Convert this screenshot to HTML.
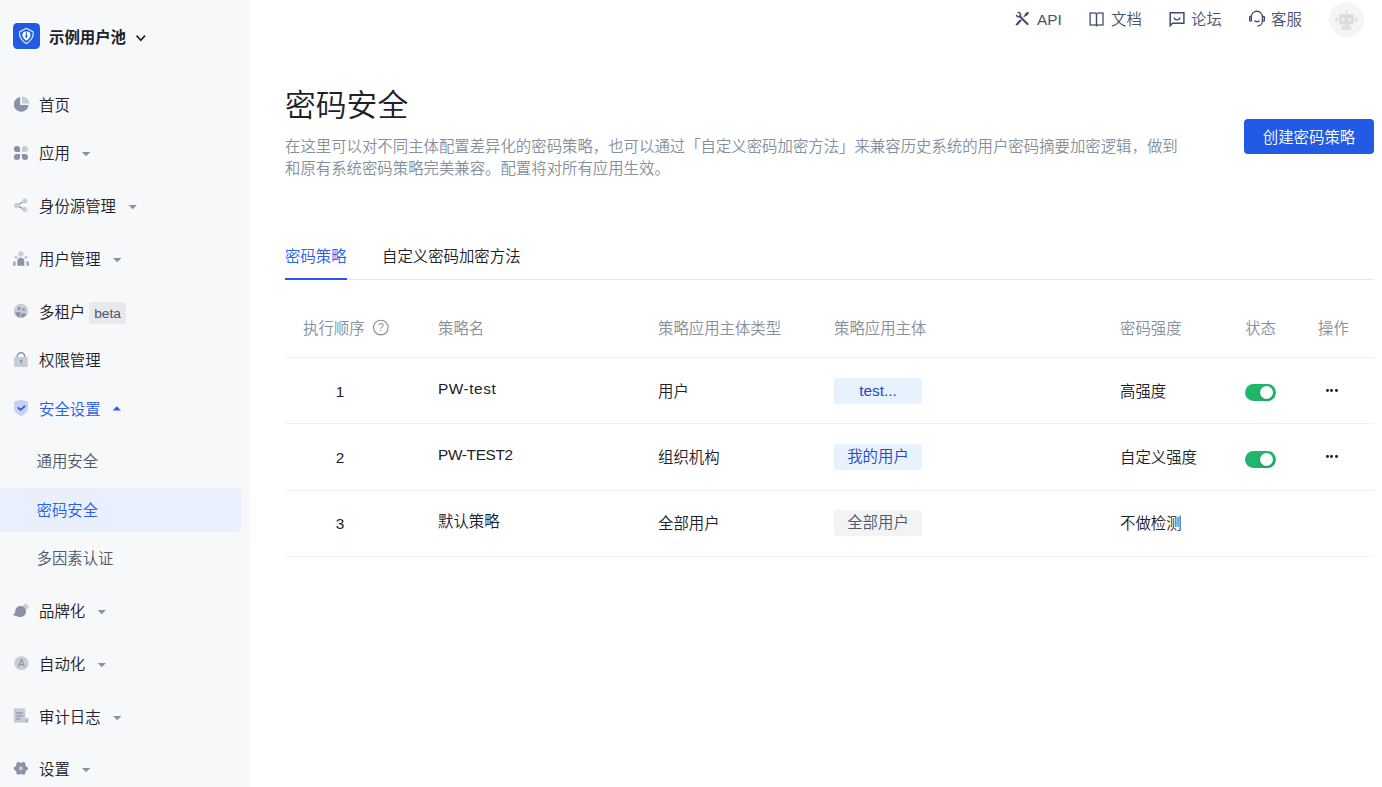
<!DOCTYPE html>
<html lang="zh-CN">
<head>
<meta charset="utf-8">
<title>密码安全</title>
<style>
*{box-sizing:border-box;margin:0;padding:0}
html,body{width:1382px;height:787px;overflow:hidden;background:#fff}
body{text-spacing-trim:space-all;font-weight:350;font-family:"Liberation Sans","Noto Sans CJK SC",sans-serif;font-size:15.4px;color:#1d2129;position:relative}
.abs{position:absolute;white-space:nowrap}
#side{position:absolute;left:0;top:0;width:250px;height:787px;background:#f7f8fa}
.nav{position:absolute;left:39px;height:24px;line-height:24px;font-size:15.4px;color:#1d2129;white-space:nowrap}
.nav.sub{left:36.5px;color:#4e5969}
.nav.on{color:#2860ee}
#sel{position:absolute;left:0;top:488px;width:241px;height:44px;background:#e9effd;border-radius:0 4.4px 4.4px 0}
.top{position:absolute;top:9px;height:22px;line-height:22px;font-size:15.4px;color:#4a5470;white-space:nowrap}
.th{position:absolute;top:318px;height:22px;line-height:22px;font-size:15.4px;color:#86909c;white-space:nowrap}
.td{position:absolute;height:22px;line-height:22px;font-size:15.4px;color:#1d2129;white-space:nowrap}
.hr{position:absolute;left:285px;width:1089px;height:1px;background:#f0f0f0}
.tag{position:absolute;left:834px;width:88px;height:26px;line-height:26px;border-radius:3px;text-align:center;font-size:15.4px;background:#e8f1fe;color:#2846c0}
.tag.gray{background:#f2f3f5;color:#4e5969}
.sw{position:absolute;left:1245px;width:31px;height:17px;border-radius:8.5px;background:#21b76b}
.sw:after{content:"";position:absolute;right:2.6px;top:2px;width:13px;height:13px;border-radius:50%;background:#fff;box-shadow:0 2px 4px rgba(0,35,11,.2)}
.dots{position:absolute;left:1326px;width:11px;height:3px}
.dots i{position:absolute;top:0;width:2.8px;height:2.8px;background:#1d2129;border-radius:50%}
</style>
</head>
<body>
<div id="side">
  <div class="abs" style="left:13px;top:22.8px;width:27px;height:26.2px;border-radius:4.4px;background:#215ae5;box-shadow:0 0 0 1px rgba(255,255,255,.75)"></div>
  <div class="abs" style="left:49px;top:26px;height:24px;line-height:24px;font-size:15.4px;font-weight:700;color:#1d2129">示例用户池</div>
  <div class="nav" style="top:94px">首页</div>
  <div class="nav" style="top:142px">应用</div>
  <div class="nav" style="top:195px">身份源管理</div>
  <div class="nav" style="top:248px">用户管理</div>
  <div class="nav" style="top:301px">多租户</div>
  <div class="abs" style="left:89px;top:302px;width:37px;height:21.8px;line-height:24.4px;border-radius:3.5px;background:#e8e9ed;color:#4b5470;font-size:13.7px;text-align:center">beta</div>
  <div class="nav" style="top:349px">权限管理</div>
  <div class="nav on" style="top:398px">安全设置</div>
  <div class="nav sub" style="top:450px">通用安全</div>
  <div id="sel"></div>
  <div class="nav sub on" style="top:499px">密码安全</div>
  <div class="nav sub" style="top:547px">多因素认证</div>
  <div class="nav" style="top:600px">品牌化</div>
  <div class="nav" style="top:653px">自动化</div>
  <div class="nav" style="top:706px">审计日志</div>
  <div class="nav" style="top:758px">设置</div>

<svg class="abs" style="left:0;top:0;pointer-events:none" width="1382" height="787" viewBox="0 0 1382 787">
<!-- logo shield -->
<g id="logo">
<path d="M26.4 28.3 L33.3 31.9 C33.6 37 31 41 26.4 43.6 C21.8 41 19.2 37 19.5 31.9 Z" fill="none" stroke="#fff" stroke-opacity=".8" stroke-width="1.3" stroke-linejoin="round"/>
<path d="M26.4 31.2 C28 31.2 30.5 32.2 30.5 34.8 C30.5 37.4 28.4 39.3 26.4 40.7 C24.4 39.3 22.3 37.4 22.3 34.8 C22.3 32.2 24.8 31.2 26.4 31.2Z" fill="#fff"/>
<path d="M26.4 29.8 V34.5" stroke="#215ae5" stroke-width=".9" fill="none"/>
<path d="M26.4 33.6 C27.4 35.2 27.5 36.2 27.3 36.8 C27.1 37.6 26.7 38.2 26.4 38.8 C26.1 38.2 25.7 37.6 25.5 36.8 C25.3 36.2 25.4 35.2 26.4 33.6Z" fill="#215ae5"/>
</g>
<path d="M136.6 35.6 L140.8 40.4 L145 35.6" fill="none" stroke="#1d2129" stroke-width="1.6"/>
<!-- pie -->
<path d="M20.1 97.1 A7.4 7.4 0 1 0 28.6 105 H20.1 Z" fill="#8992a8"/>
<path d="M21.9 96.4 A7.4 7.4 0 0 1 29.4 103.6 H21.9 Z" fill="#c8ccd7"/>
<!-- apps -->
<path d="M16.9 146 a3 3 0 0 1 3.1 3 v2.95 h-3.1 a2.97 2.97 0 0 1 0 -5.95Z" fill="#8992a8"/>
<path d="M25 146 a2.97 2.97 0 0 1 0 5.95 h-3.1 v-2.95 a3 3 0 0 1 3.1 -3Z" fill="#c8ccd7"/>
<path d="M16.9 160 a3.05 3.05 0 0 1 0 -6.1 h3.1 v3.1 a3 3 0 0 1 -3.1 3Z" fill="#8992a8"/>
<path d="M25 160 a3 3 0 0 1 -3.1 -3 v-3.1 h3.1 a3.05 3.05 0 0 1 0 6.1Z" fill="#8992a8"/>
<!-- share -->
<path d="M24.8 201 L16.6 205.4 L24.8 209.6" fill="none" stroke="#8992a8" stroke-width="1.2"/>
<circle cx="16.6" cy="205.4" r="2.5" fill="#c8ccd7"/><circle cx="24.8" cy="201" r="2.5" fill="#c8ccd7"/><circle cx="24.8" cy="209.6" r="2.5" fill="#c8ccd7"/>
<!-- users -->
<circle cx="20.9" cy="253.9" r="2.7" fill="#c8ccd7"/>
<circle cx="16.1" cy="257.3" r="1.7" fill="#c8ccd7"/><circle cx="26" cy="257.3" r="1.7" fill="#c8ccd7"/>
<path d="M17.3 265.7 V261.3 a3.5 3.5 0 0 1 7 0 V265.7Z" fill="#8992a8"/>
<path d="M13 265.7 V263.6 a2.6 2.6 0 0 1 2.6 -2.6 V265.7Z" fill="#8992a8" fill-opacity=".8"/>
<path d="M29 265.7 V263.6 a2.6 2.6 0 0 0 -2.6 -2.6 V265.7Z" fill="#8992a8" fill-opacity=".8"/>
<!-- tenant -->
<circle cx="21" cy="311" r="7.2" fill="#c8ccd7"/>
<ellipse cx="19.1" cy="308.8" rx="1.4" ry="1.7" fill="#8992a8"/><circle cx="23.7" cy="309.6" r="1.3" fill="#8992a8"/>
<path d="M15.6 312.3 H20.8 L19.7 317.5 C18.2 317.2 16.4 316 15.6 314.2Z" fill="#8992a8"/>
<path d="M21.1 317.5 V314 C22 313 25 313 26 314 C26 315.4 23.8 317.5 21.1 317.5Z" fill="#8992a8"/>
<!-- lock -->
<path d="M17.2 357.6 V356.4 a3.75 3.75 0 0 1 7.5 0 V357.6" fill="none" stroke="#8992a8" stroke-width="1.5"/>
<rect x="14.1" y="357.1" width="13.6" height="9.8" rx="0.6" fill="#c8ccd7"/>
<circle cx="21.2" cy="360.8" r="1.25" fill="#8992a8"/><rect x="20.7" y="360.8" width="1" height="3" rx=".4" fill="#8992a8"/>
<!-- shield -->
<path d="M21.05 399.7 L28 401.4 V408.6 C28 412.2 24.6 414.6 21.05 416.3 C17.5 414.6 14.1 412.2 14.1 408.6 V401.4 Z" fill="#c6d2f1"/>
<path d="M17.7 407.3 L20.6 409.9 L25.1 405.8" fill="none" stroke="#215ae5" stroke-width="1.7"/>
<!-- brush -->
<path d="M25.4 603.6 L29 606.4 L26.6 609.4 L22.8 606.7Z" fill="#c8ccd7" stroke="#c8ccd7" stroke-width=".6" stroke-linejoin="round"/>
<path d="M12.8 614.6 C14.6 613.8 15 613 15.2 611.4 C15.4 608.2 17.8 606 20.6 606 C23.6 606 26 608.4 26 611.4 C26 614.6 23.4 616.9 20.4 616.9 C17.4 616.9 14.6 616 12.8 614.6Z" fill="#8992a8"/>
<!-- A -->
<circle cx="21.4" cy="663.25" r="7.1" fill="#c8ccd7"/>
<text x="21.4" y="666.8" font-size="10.2" text-anchor="middle" fill="#8992a8" font-family="Liberation Sans, sans-serif">A</text>
<!-- doc -->
<path d="M15 708.2 H24.1 a1.2 1.2 0 0 1 1.2 1.2 V718 H28.7 V721.3 a1.5 1.5 0 0 1 -1.5 1.5 H15 a1.2 1.2 0 0 1 -1.2 -1.2 V709.4 a1.2 1.2 0 0 1 1.2 -1.2Z" fill="#c8ccd7"/>
<path d="M25.8 719.6 H26.6 L27 721.9 H25.8Z" fill="#8992a8"/>
<path d="M16.1 712.9 H22.9 M16.1 716 H22.9 M16.1 719 H20.2" stroke="#8992a8" stroke-width="1.5" fill="none" stroke-opacity=".8"/>
<path d="M81.9 152 H90.30000000000001 L86.10000000000001 156.2Z" fill="#8992a8"/>
<path d="M128.5 205 H136.9 L132.7 209.2Z" fill="#8992a8"/>
<path d="M113 258 H121.4 L117.2 262.2Z" fill="#8992a8"/>
<path d="M112.6 410.4 L116.8 406.2 L121.0 410.4Z" fill="#2860ee"/>
<path d="M97.6 610 H106.0 L101.8 614.2Z" fill="#8992a8"/>
<path d="M97.6 663 H106.0 L101.8 667.2Z" fill="#8992a8"/>
<path d="M113 716 H121.4 L117.2 720.2Z" fill="#8992a8"/>
<path d="M81.9 768 H90.30000000000001 L86.10000000000001 772.2Z" fill="#8992a8"/>
<!-- gear -->
<circle cx="20.9" cy="768.4" r="5.6" fill="#8992a8"/><circle cx="26.00" cy="768.40" r="2" fill="#8992a8"/><circle cx="23.45" cy="772.82" r="2" fill="#8992a8"/><circle cx="18.35" cy="772.82" r="2" fill="#8992a8"/><circle cx="15.80" cy="768.40" r="2" fill="#8992a8"/><circle cx="18.35" cy="763.98" r="2" fill="#8992a8"/><circle cx="23.45" cy="763.98" r="2" fill="#8992a8"/><circle cx="20.9" cy="768.4" r="2.1" fill="#c8ccd7"/>
</svg>
</div>

<div class="top" style="left:1037px">API</div>
<div class="top" style="left:1111px">文档</div>
<div class="top" style="left:1191px">论坛</div>
<div class="top" style="left:1271px">客服</div>
<div class="abs" style="left:1329.1px;top:1.9px;width:34.8px;height:34.8px;border-radius:50%;background:#f5f5f5"></div>
<svg class="abs" style="left:0;top:0;pointer-events:none" width="1382" height="787" viewBox="0 0 1382 787">
<!-- header icons -->
<g fill="none" stroke="#414b6b" stroke-linecap="round" stroke-linejoin="round">
<path d="M1019.7 16.3 L1027.5 24.1" stroke-width="2.1"/>
<path d="M1017.6 12.75 A2.1 2.1 0 1 1 1016.4 14.85" stroke-width="1.4" stroke-linecap="butt"/>
<path d="M1025.8 14.9 L1027.6 13.1" stroke-width="2.5"/>
<path d="M1024 16.6 L1025.8 14.9" stroke-width="1.2"/>
<path d="M1020.2 20.7 L1017 24.3" stroke-width="2.2" stroke-linecap="square"/>
</g>
<g fill="none" stroke="#414b6b" stroke-width="1.4" stroke-linejoin="miter">
<path d="M1096.5 14.2 C1096.2 13.2 1095.4 12.9 1094.6 12.9 H1090.1 V25 H1103 V12.9 H1098.4 C1097.6 12.9 1096.8 13.2 1096.5 14.2" stroke-width="1.5" stroke-opacity=".85"/>
<path d="M1096.5 14 V26.6" stroke-width="1.4"/>
<path d="M1170.2 12.85 H1183.9 V23.25 H1172.6 L1170.2 25.6 Z" stroke-width="1.5"/>
<path d="M1174.2 17.5 C1174.4 20.7 1179.7 20.7 1179.9 17.5" stroke-width="1.4"/>
<path d="M1251.3 21 V16.8 A5.55 5.55 0 0 1 1262.4 16.8 V21 C1262.4 24 1260.2 26 1257.4 26.1" stroke-width="1.3"/>
<rect x="1249.6" y="16.4" width="1.8" height="4.8" rx=".9" stroke-width="1.2"/>
<rect x="1262.7" y="16.4" width="1.8" height="4.8" rx=".9" stroke-width="1.2"/>
<path d="M1254.3 20.8 Q1257 22.7 1259.7 20.8" stroke-width="1.4"/>
</g>
<!-- robot -->
<g fill="#dcdcdc">
<rect x="1339" y="14.2" width="14.8" height="10.4" rx=".8"/>
<rect x="1345.9" y="11" width="1" height="3.4"/><circle cx="1346.4" cy="10.7" r="1.05"/>
<path d="M1335 18.6 l2.5 -1.8 v5.2 l-2.5 -1.8Z M1358 18.6 l-2.5 -1.8 v5.2 l2.5 -1.8Z"/>
<path d="M1344.4 24.4 h4.5 v1.8 h2.3 v3.5 h-9.4 v-3.5 h2.6Z"/>
</g>
<circle cx="1342.8" cy="19.5" r="1.45" fill="#f5f5f5"/><circle cx="1349.7" cy="19.5" r="1.45" fill="#f5f5f5"/>
<!-- help -->
<circle cx="380.8" cy="327.6" r="7.3" fill="none" stroke="#86909c" stroke-width="1.1"/>
<text x="380.8" y="331.4" font-size="10.5" text-anchor="middle" fill="#86909c" font-family="Liberation Sans, sans-serif">?</text>
</svg>

<div class="abs" style="left:285px;top:85px;height:42px;line-height:42px;font-size:30.8px;font-weight:350;color:#1d2129">密码安全</div>
<div class="abs" style="left:285px;top:136px;width:900px;line-height:22px;font-size:15.4px;color:#86909c;white-space:normal">在这里可以对不同主体配置差异化的密码策略，也可以通过「自定义密码加密方法」来兼容历史系统的用户密码摘要加密逻辑，做到<br>和原有系统密码策略完美兼容。配置将对所有应用生效。</div>
<div class="abs" style="left:1244px;top:119px;width:130px;height:35px;line-height:38px;border-radius:4px;background:#215ae5;color:#fff;font-size:15.4px;text-align:center">创建密码策略</div>

<div class="abs" style="left:285px;top:246px;height:22px;line-height:22px;font-size:15.4px;color:#2b5ff0">密码策略</div>
<div class="abs" style="left:382px;top:246px;height:22px;line-height:22px;font-size:15.4px;color:#1d2129">自定义密码加密方法</div>
<div class="hr" style="top:279px;background:#e5e6eb"></div>
<div class="abs" style="left:285px;top:278px;width:62px;height:2px;background:#2257f0"></div>

<div class="th" style="left:303px">执行顺序</div>
<div class="th" style="left:438px">策略名</div>
<div class="th" style="left:658px">策略应用主体类型</div>
<div class="th" style="left:834px">策略应用主体</div>
<div class="th" style="left:1120px">密码强度</div>
<div class="th" style="left:1245px">状态</div>
<div class="th" style="left:1318px">操作</div>
<div class="hr" style="top:357px"></div>
<div class="hr" style="top:423px"></div>
<div class="hr" style="top:490px"></div>
<div class="hr" style="top:556px"></div>

<div class="td" style="left:330px;width:20px;text-align:center;top:381px">1</div>
<div class="td" style="left:438px;top:378px;letter-spacing:.55px">PW-test</div>
<div class="td" style="left:658px;top:381px">用户</div>
<div class="tag" style="top:378px">test...</div>
<div class="td" style="left:1120px;top:381px">高强度</div>
<div class="sw" style="top:384px"></div>
<div class="dots" style="top:389px"><i style="left:0"></i><i style="left:4.4px"></i><i style="left:8.8px"></i></div>

<div class="td" style="left:330px;width:20px;text-align:center;top:447px">2</div>
<div class="td" style="left:438px;top:444px;letter-spacing:-.35px">PW-TEST2</div>
<div class="td" style="left:658px;top:447px">组织机构</div>
<div class="tag" style="top:444px">我的用户</div>
<div class="td" style="left:1120px;top:447px">自定义强度</div>
<div class="sw" style="top:450.5px"></div>
<div class="dots" style="top:455px"><i style="left:0"></i><i style="left:4.4px"></i><i style="left:8.8px"></i></div>

<div class="td" style="left:330px;width:20px;text-align:center;top:513px">3</div>
<div class="td" style="left:438px;top:511px">默认策略</div>
<div class="td" style="left:658px;top:513px">全部用户</div>
<div class="tag gray" style="top:510px">全部用户</div>
<div class="td" style="left:1120px;top:513px">不做检测</div>
</body>
</html>
